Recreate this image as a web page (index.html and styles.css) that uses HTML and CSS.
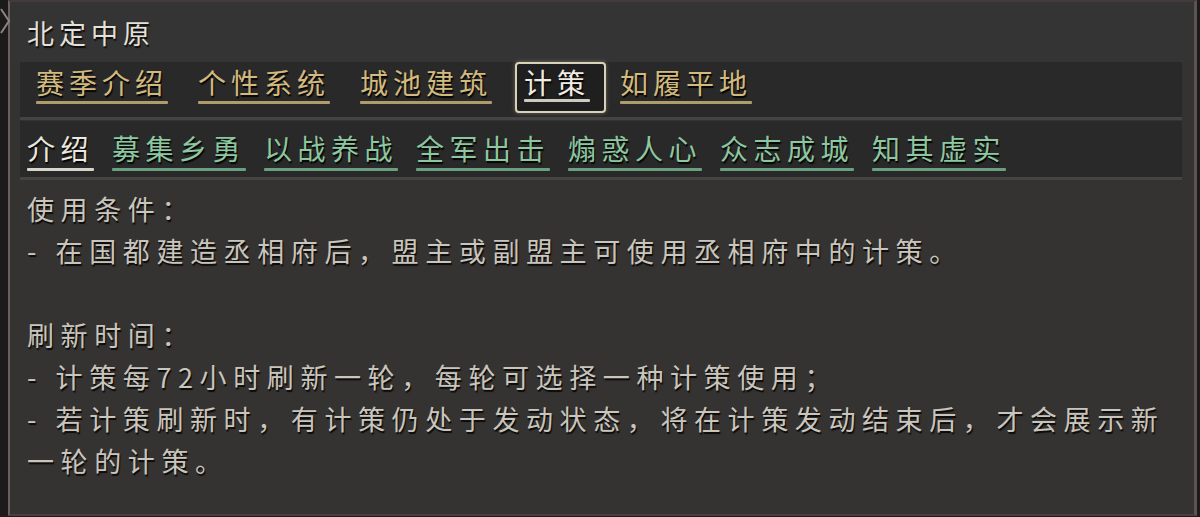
FILE: index.html
```html
<!DOCTYPE html>
<html lang="zh">
<head>
<meta charset="utf-8">
<link rel="stylesheet" href="styles.css">
</head>
<body>
<div class="frame">
  <svg class="chevron" width="12" height="30" viewBox="0 0 12 30"><path d="M1 3 L9 15 L1 27" fill="none" stroke="#8e8484" stroke-width="2"/></svg>
  <div class="header"><span class="title">北定中原</span></div>
  <div class="tabbar main">
    <span class="tab gold">赛季介绍</span>
    <span class="tab gold">个性系统</span>
    <span class="tab gold">城池建筑</span>
    <span class="tab active">计策</span>
    <span class="tab gold">如履平地</span>
  </div>
  <div class="tabbar sub">
    <span class="tab white">介绍</span>
    <span class="tab green">募集乡勇</span>
    <span class="tab green">以战养战</span>
    <span class="tab green">全军出击</span>
    <span class="tab green">煽惑人心</span>
    <span class="tab green">众志成城</span>
    <span class="tab green">知其虚实</span>
  </div>
  <div class="content">
    <p>使用条件：</p>
    <p>- 在国都建造丞相府后，盟主或副盟主可使用丞相府中的计策。</p>
    <p class="blank">&nbsp;</p>
    <p>刷新时间：</p>
    <p>- 计策每72小时刷新一轮，每轮可选择一种计策使用；</p>
    <p>- 若计策刷新时，有计策仍处于发动状态，将在计策发动结束后，才会展示新一轮的计策。</p>
  </div>
</div>
</body>
</html>
```
FILE: styles.css
```css
html, body {
  margin: 0;
  padding: 0;
  background: #1c1a1a;
  width: 1200px;
  height: 517px;
  overflow: hidden;
}
body {
  font-family: "Noto Sans CJK SC", "Noto Sans", sans-serif;
}
.frame {
  position: relative;
  box-sizing: border-box;
  margin-left: 8px;
  width: 1189px;
  height: 516px;
  background: #343332;
  border-left: 2px solid #6e5f5f;
  border-right: 3px solid #5e5252;
  border-top: 2px solid #443a3a;
  border-bottom: 2px solid #4a3f3f;
}
.chevron {
  position: absolute;
  left: -10px;
  top: 4px;
}
.header {
  height: 60px;
  display: flex;
  align-items: center;
  padding-left: 17px;
  background: #343434;
}
.title {
  font-size: 27px;
  letter-spacing: 5px;
  color: #e4e1da;
  text-shadow: 1px 2px 1px #0c0c0c;
}
.tabbar {
  display: flex;
  margin: 0 12px 0 10px;
  background: #292929;
  border-bottom: 3px solid #444444;
}
.tabbar.main {
  height: 52px;
  align-items: flex-start;
  padding-top: 3px;
  gap: 14px;
  padding-left: 8px;
}
.tabbar.sub {
  margin-top: 1px;
  height: 56px;
  align-items: center;
  gap: 18px;
  padding-left: 7px;
}
.tab {
  position: relative;
  font-size: 28px;
  line-height: 34px;
  letter-spacing: 5px;
  padding-bottom: 2px;
  text-shadow: 1px 2px 1px #050505;
}
.tabbar.sub .tab {
  letter-spacing: 5.5px;
}
.tab::after {
  content: "";
  position: absolute;
  left: 0;
  right: 0;
  bottom: -4px;
  height: 3px;
  border-radius: 1px;
}
.tabbar.main .tab {
  padding-left: 8px;
  padding-right: 8px;
}
.tabbar.main .tab::after {
  left: 8px;
  right: 8px;
  bottom: -3px;
}
.tab.gold { color: #d2ba7e; }
.tab.gold::after { background: #b09c68; }
.tab.green { color: #8cc7a0; }
.tab.green::after { background: #6a9f82; }
.tab.white { color: #ebe7de; }
.tab.white::after { background: #d8d4cc; }
.tabbar.main .tab.active {
  color: #efebe2;
  border: 2px solid #d9d2b8;
  border-radius: 4px;
  background: #1f1f1f;
  box-shadow: 0 0 4px rgba(230, 220, 180, 0.35);
  padding: 1px 14px 12px 7px;
  margin-top: -3px;
  margin-left: 1px;
  margin-right: -8px;
}
.tabbar.main .tab.active::after {
  background: #cfcac0;
  left: 7px;
  right: 14px;
  bottom: 9px;
}
.content {
  padding: 8px 20px 0 17px;
  color: #cac5bc;
  font-size: 27px;
  line-height: 42px;
  letter-spacing: 6.6px;
  text-shadow: 1px 2px 1px #0a0a0a;
}
.content p {
  margin: 0;
}
```
